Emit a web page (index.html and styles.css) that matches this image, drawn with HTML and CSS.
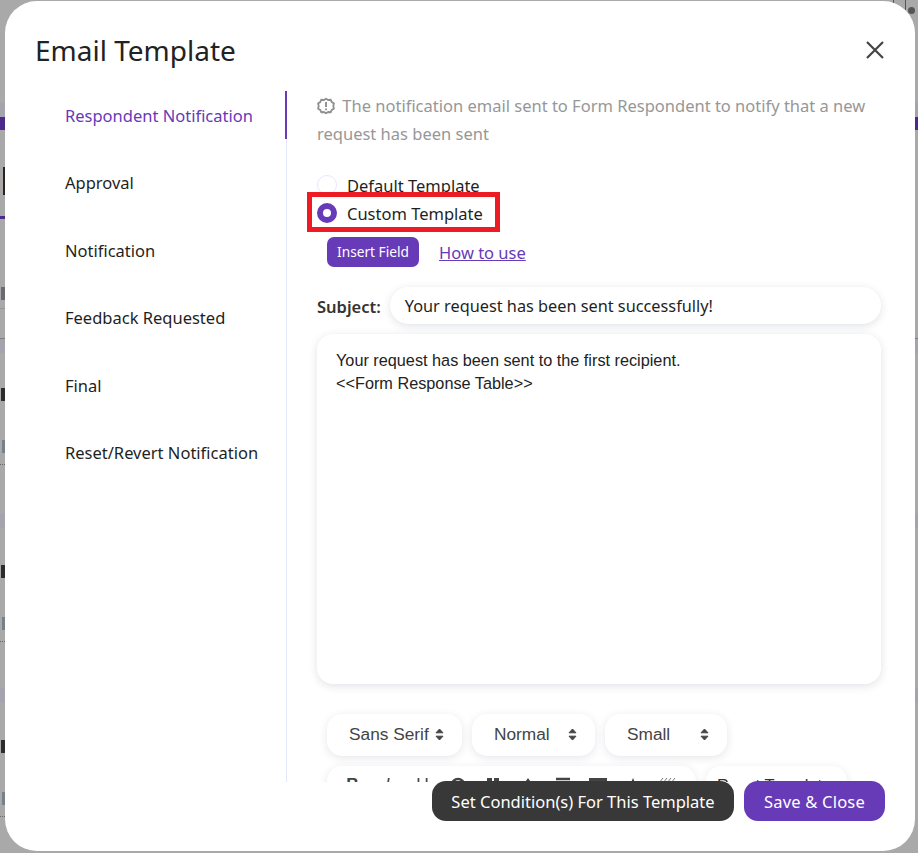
FILE: index.html
```html
<!DOCTYPE html>
<html lang="en">
<head>
<meta charset="utf-8">
<title>Email Template</title>
<link rel="stylesheet" href="styles.css">
</head>
<body>
<div class="backdrop">
  <span class="bit avatar-box"></span>
  <span class="bit avatar-dot"></span>
  <span class="bit band-l b1"></span>
  <span class="bit purple-l"></span>
  <span class="bit bar"></span>
  <span class="bit line-l"></span>
  <span class="bit mark m0"></span>
  <span class="bit rule r0"></span>
  <span class="bit band-l b2"></span>
  <span class="bit band-l b3"></span>
  <span class="bit band-l b4"></span>
  <span class="bit mark m1"></span>
  <span class="bit mark m2"></span>
  <span class="bit mark m3"></span>
  <span class="bit mark soft s1"></span>
  <span class="bit mark soft s2"></span>
  <span class="bit mark soft s3"></span>
  <span class="bit dots d1"></span>
  <span class="bit dots d2"></span>
  <span class="bit dots d3"></span>
  <span class="bit band-r b1"></span>
  <span class="bit purple-r"></span>
  <span class="bit band-r b2"></span>
  <span class="bit band-r b3"></span>
  <span class="bit band-r b4"></span>
</div>
<div class="modal">
  <header class="modal-head">
    <h1>Email Template</h1>
    <button class="close" aria-label="Close">
      <svg width="18" height="18" viewBox="0 0 18 18"><path d="M1 1 17 17M17 1 1 17" fill="none" stroke="#444" stroke-width="2.2"/></svg>
    </button>
  </header>
  <div class="modal-body">
    <nav class="tabs">
      <a class="tab active">Respondent Notification</a>
      <a class="tab">Approval</a>
      <a class="tab">Notification</a>
      <a class="tab">Feedback Requested</a>
      <a class="tab">Final</a>
      <a class="tab">Reset/Revert Notification</a>
    </nav>
    <main class="pane">
      <p class="notice">
        <svg class="notice-icon" width="18" height="18" viewBox="0 0 18 18"><path d="M9 1.200l2.200 1.300 2.500-.2 1.100 2.300 2.100 1.400-.6 2.500.6 2.500-2.100 1.400-1.100 2.300-2.500-.2L9 15.800l-2.200-1.300-2.500.2-1.100-2.300-2.100-1.400.6-2.500-.6-2.500 2.100-1.400 1.100-2.300 2.500.2z" transform="translate(0 .5)" fill="none" stroke="#8f8f8f" stroke-width="1.800"/><path d="M9 5v5M9 11.600v1.600" stroke="#8f8f8f" stroke-width="1.900" fill="none"/></svg>
        The notification email sent to Form Respondent to notify that a new request has been sent
      </p>
      <div class="radios">
        <label class="radio"><span class="dot"></span>Default Template</label>
        <label class="radio checked"><span class="dot"></span>Custom Template<span class="callout"></span></label>
      </div>
      <div class="actions">
        <button class="insert">Insert Field</button>
        <a class="howto">How to use</a>
      </div>
      <div class="subject">
        <strong>Subject:</strong>
        <div class="subject-input">Your request has been sent successfully!</div>
      </div>
      <div class="editor">
        <div>Your request has been sent to the first recipient.</div>
        <div>&lt;&lt;Form Response Table&gt;&gt;</div>
      </div>
      <div class="toolbar">
        <div class="pill select w-font">Sans Serif<svg class="updown" width="9" height="13" viewBox="0 0 9 13"><path d="M4.500 1 8 4.800H1zM4.500 12 1 8.200h7z" fill="#444" stroke="#444" stroke-linejoin="round"/></svg></div>
        <div class="pill select w-norm">Normal<svg class="updown" width="9" height="13" viewBox="0 0 9 13"><path d="M4.500 1 8 4.800H1zM4.500 12 1 8.200h7z" fill="#444" stroke="#444" stroke-linejoin="round"/></svg></div>
        <div class="pill select w-size">Small<svg class="updown" width="9" height="13" viewBox="0 0 9 13"><path d="M4.500 1 8 4.800H1zM4.500 12 1 8.200h7z" fill="#444" stroke="#444" stroke-linejoin="round"/></svg></div>
      </div>
      <div class="toolbar second">
        <div class="pill format">
          <b>B</b><i>I</i><u>U</u>
          <svg width="14" height="16" viewBox="0 0 14 16"><circle cx="7" cy="8" r="6" fill="none" stroke="#444" stroke-width="2.500"/></svg>
          <svg width="14" height="16" viewBox="0 0 14 16"><path d="M1 1h5v6H1zM8 1h5v6H8z" fill="#444"/></svg>
          <svg width="12" height="16" viewBox="0 0 12 16"><path d="M6 1 11 8 6 15 1 8z" fill="#444"/></svg>
          <svg width="14" height="16" viewBox="0 0 14 16"><path d="M0 2h14M0 8h14M0 14h14" stroke="#444" stroke-width="2.500"/></svg>
          <svg width="18" height="16" viewBox="0 0 18 16"><path d="M0 1h18v14H0z" fill="#444"/></svg>
          <svg width="14" height="16" viewBox="0 0 14 16"><path d="M7 1 13 15H1z" fill="#444"/></svg>
          <svg width="20" height="16" viewBox="0 0 20 16"><path d="M1 6 5 1M5 6 9 1M9 6 13 1M13 6 17 1M3 9 7 4M7 9 11 4M11 9 15 4M15 9 19 4" stroke="#777" stroke-width="1"/></svg>
        </div>
        <div class="pill reset">Reset Template</div>
      </div>
    </main>
  </div>
  <footer class="modal-foot">
    <button class="btn dark">Set Condition(s) For This Template</button>
    <button class="btn primary">Save &amp; Close</button>
  </footer>
</div>
</body>
</html>
```
FILE: styles.css
```css
* { box-sizing: border-box; }
html, body { margin: 0; height: 853px; overflow: hidden; }
body {
  position: relative;
  background: #a9a9a9;
  font-family: "Noto Sans", sans-serif;
  color: #1f1f1f;
  padding: 1px 3px 2px 5px;
}
.backdrop { position: absolute; inset: 0; }
.bit { position: absolute; display: block; }
.band-l, .band-r { height: 15px; background: #a5a3ad; }
.band-l { left: 0; width: 5px; }
.band-r { left: 915px; width: 3px; }
.b1 { top: 103px; height: 14px; }
.b2 { top: 338px; border-top: 1px solid #7d7d7d; }
.b3 { top: 513px; }
.b4 { top: 688px; }
.purple-l, .purple-r { top: 117px; height: 13px; background: #4b2a8a; }
.purple-l { left: 0; width: 5px; }
.purple-r { left: 915px; width: 3px; }
.bar { left: 3px; top: 167px; width: 2px; height: 28px; background: #2a2320; }
.line-l { left: 0; top: 216px; width: 5px; height: 3px; background: #4b2a8a; }
.mark { left: 1px; width: 4px; height: 13px; background: #2c2c2c; }
.m0 { top: 287px; background: #6b6b70; }
.m1 { top: 388px; }
.m2 { top: 565px; }
.m3 { top: 740px; }
.soft { background: #77808c; height: 13px; width: 3px; left: 2px; }
.s1 { top: 440px; }
.s2 { top: 617px; }
.s3 { top: 792px; }
.rule { left: 0; width: 5px; height: 1px; background: #979797; }
.r0 { top: 308px; }
.dots { left: 0; width: 5px; border-top: 1px dotted #666; }
.d1 { top: 464px; }
.d2 { top: 641px; }
.d3 { top: 816px; width: 25px; }
.avatar-box { left: 893px; top: -2px; width: 13px; height: 14px; border: 1px solid #555; }
.avatar-dot { left: 908px; top: 7px; width: 7px; height: 7px; border-radius: 50%; background: #555; }

.modal {
  position: relative;
  width: 910px;
  height: 850px;
  background: #fff;
  border-radius: 32px;
  display: flex;
  flex-direction: column;
  overflow: hidden;
}
.modal-head {
  height: 90px;
  flex: none;
  display: flex;
  align-items: center;
  justify-content: space-between;
  padding: 8px 31px 0 30px;
}
.modal-head h1 { margin: 0; font-size: 28px; font-weight: 400; color: #222; }
.close { border: 0; background: none; padding: 0; display: flex; }

.modal-body { height: 691px; flex: none; display: flex; overflow: hidden; }
.tabs {
  width: 282px;
  flex: none;
  border-right: 1px solid #e4e6fa;
  display: flex;
  flex-direction: column;
  gap: 19.600px;
}
.tab {
  height: 48px;
  padding-left: 60px;
  display: flex;
  align-items: center;
  font-size: 16.500px;
  color: #1f1f1f;
}
.tab.active { color: #673ab7; border-right: 2px solid #673ab7; margin-right: -1px; }

.pane { flex: 1; min-width: 0; padding: 0 34px 0 30px; }
.notice { margin: 0; padding-top: 1px; font-size: 16.500px; line-height: 28px; color: #979797; }
.notice-icon { vertical-align: -3px; margin-right: 3px; }
.radios { margin-top: 23px; display: flex; flex-direction: column; }
.radio { position: relative; height: 28px; display: flex; align-items: center; gap: 10px; font-size: 16.500px; }
.dot { width: 20px; height: 20px; border-radius: 50%; border: 1px solid #e6e8fa; background: #fff; }
.checked .dot { border: 6px solid #673ab7; }
.callout {
  position: absolute;
  left: -10px;
  top: -7px;
  width: 193px;
  height: 40px;
  border: 5px solid #ed1c24;
}
.actions { margin: 10px 0 0 10px; display: flex; align-items: center; gap: 20px; }
.insert {
  height: 30px;
  width: 92px;
  border: 0;
  border-radius: 7px;
  background: #673ab7;
  color: #fff;
  font: 13.700px "Noto Sans", sans-serif;
  padding: 0 0 2px;
}
.howto { color: #673ab7; text-decoration: underline; font-size: 16.500px; }
.subject { margin-top: 20px; display: flex; align-items: center; gap: 9px; }
.subject strong { font-size: 16.500px; font-weight: 600; color: #333; padding-top: 1px; }
.subject-input {
  flex: 1;
  height: 37px;
  border-radius: 18.500px;
  padding: 1px 15px 0;
  display: flex;
  align-items: center;
  background: #fff;
  box-shadow: 0 2px 8px rgba(40, 50, 80, .14);
  font-size: 16.300px;
}
.editor {
  margin-top: 10px;
  height: 350px;
  border-radius: 16px;
  padding: 15px 19px;
  background: #fff;
  box-shadow: 0 2px 8px rgba(40, 50, 80, .14);
  font: 16.250px/23px "Liberation Sans", Arial, sans-serif;
  color: #222;
}
.toolbar { margin: 30px 0 0 10px; display: flex; gap: 10px; }
.toolbar.second { margin-top: 10px; }
.pill {
  height: 42px;
  border-radius: 15px;
  background: #fff;
  box-shadow: 0 2px 8px rgba(40, 50, 80, .12);
  font: 17.300px "Liberation Sans", Arial, sans-serif;
  color: #444;
  display: flex;
  align-items: center;
  flex: none;
}
.select { justify-content: space-between; padding: 0 18px 1px 22px; }
.w-font { width: 135px; }
.w-norm { width: 123px; }
.w-size { width: 122px; }
.format {
  width: 369px;
  padding: 0 0 5px 8px;
  display: grid;
  grid-template-columns: repeat(10, 35px);
  justify-items: center;
  align-items: center;
}
.reset { width: 141px; padding: 0 0 4px 11px; color: #333; font-size: 16.500px; }

.modal-foot {
  position: absolute;
  right: 30px;
  top: 780px;
  display: flex;
  gap: 10px;
}
.btn {
  height: 40px;
  border: 0;
  border-radius: 14px;
  color: #fff;
  font: 16.500px "Noto Sans", sans-serif;
  padding: 0;
}
.dark { width: 302px; background: #383838; }
.primary { width: 141px; background: #673ab7; letter-spacing: .2px; }
```
